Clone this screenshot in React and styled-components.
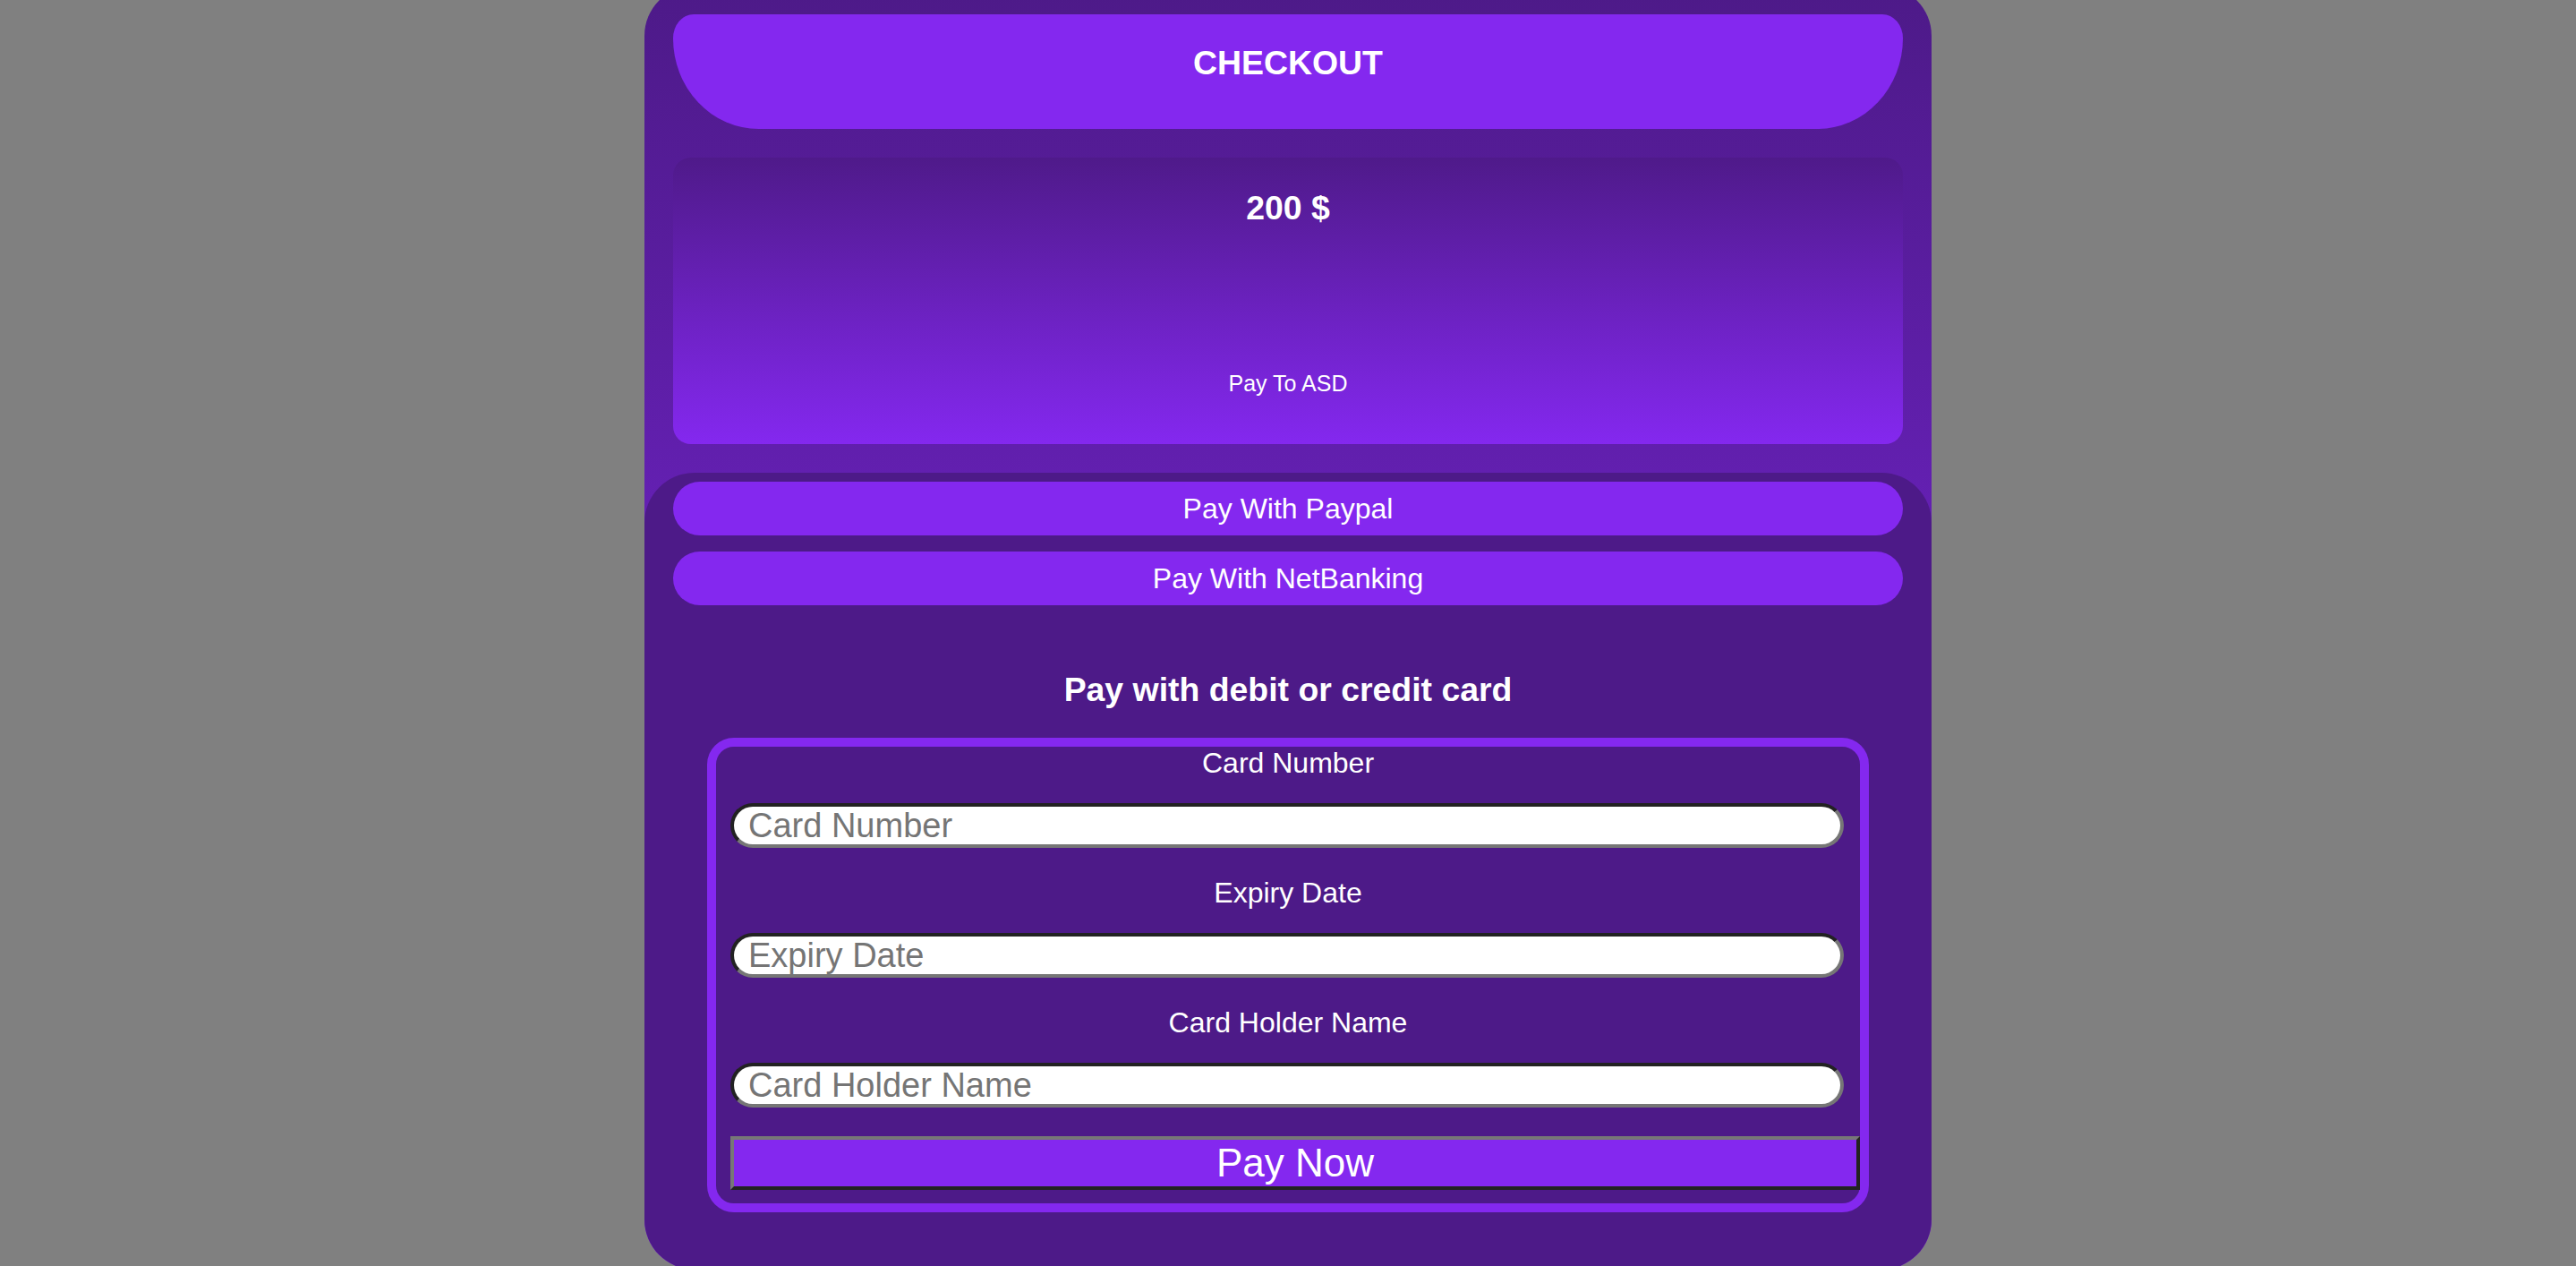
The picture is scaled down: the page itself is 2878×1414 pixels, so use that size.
import React from "react"
import styled, { createGlobalStyle } from "styled-components"

const DARK = "#4d1a88"
const BRIGHT = "#8428ef"

const GlobalStyle = createGlobalStyle`
  html, body {
    margin: 0;
    padding: 0;
    height: 100%;
    overflow: hidden;
    background: #808080;
    font-family: "Liberation Sans", Arial, sans-serif;
  }
`

const Page = styled.div`
  display: flex;
  justify-content: center;
  height: 100vh;
`

const Card = styled.div`
  width: 1438px;
  height: 1434px;
  margin-top: -16px;
  padding: 32px 32px 0;
  box-sizing: border-box;
  display: flex;
  flex-direction: column;
  border-radius: 56px;
  overflow: hidden;
  background: linear-gradient(${DARK}, ${BRIGHT});
  color: #fff;
  text-align: center;
`

const Heading = styled.h3`
  margin: 0;
  font-size: 37.4px;
  line-height: 43px;
  font-weight: 700;
`

const Header = styled.div`
  height: 128px;
  padding-top: 33px;
  box-sizing: border-box;
  background: ${BRIGHT};
  border-radius: 24px 24px 100px 100px / 28px 28px 106px 106px;
`

const Amount = styled.div`
  margin-top: 32px;
  height: 320px;
  padding-top: 35px;
  box-sizing: border-box;
  border-radius: 20px;
  background: linear-gradient(#4f1a8a, ${BRIGHT});

  ${Heading} {
    margin-bottom: 160px;
  }
`

const PayTo = styled.div`
  font-size: 25px;
  line-height: 29px;
`

const Methods = styled.div`
  flex: 1;
  margin: 32px -32px 0;
  padding: 10px 32px 0;
  background: ${DARK};
  border-radius: 56px 56px 0 0;
  display: flex;
  flex-direction: column;

  > ${Heading} {
    margin: 73px 0 32px;
  }
`

const MethodButton = styled.div`
  height: 60px;
  display: flex;
  align-items: center;
  justify-content: center;
  border-radius: 30px;
  background: ${BRIGHT};
  font-size: 32px;
  & + & {
    margin-top: 18px;
  }
`

const CardForm = styled.form`
  margin: 0 38px;
  padding: 0 16px 15px;
  border: 10px solid ${BRIGHT};
  border-radius: 30px;
  display: flex;
  flex-direction: column;
  align-items: stretch;
`

const Label = styled.label`
  font-size: 32px;
  line-height: 37px;
  margin-bottom: 26px;
`

const Input = styled.input`
  height: 50px;
  width: calc(100% - 2px);
  box-sizing: border-box;
  margin: 0 0 32px;
  padding: 0 16px;
  border: 4px solid #767676;
  border-top-color: #222;
  border-left-color: #222;
  border-radius: 25px;
  background: #fff;
  font-family: "Liberation Sans", Arial, sans-serif;
  font-size: 38px;
  color: #000;
  outline: none;

  &::placeholder {
    color: #757575;
  }
`

const PayNow = styled.button`
  width: calc(100% + 16px);
  height: 60px;
  box-sizing: border-box;
  margin: 0;
  padding: 0;
  border: 4px solid #222;
  border-top-color: #777;
  border-left-color: #777;
  background: ${BRIGHT};
  color: #fff;
  font-family: "Liberation Sans", Arial, sans-serif;
  font-size: 44px;
`

const fields = ["Card Number", "Expiry Date", "Card Holder Name"]

export default function App() {
  return (
    <>
      <GlobalStyle />
      <Page>
        <Card>
          <Header>
            <Heading>CHECKOUT</Heading>
          </Header>
          <Amount>
            <Heading>200 $</Heading>
            <PayTo>Pay To ASD</PayTo>
          </Amount>
          <Methods>
            <MethodButton>Pay With Paypal</MethodButton>
            <MethodButton>Pay With NetBanking</MethodButton>
            <Heading>Pay with debit or credit card</Heading>
            <CardForm onSubmit={e => e.preventDefault()}>
              {fields.map(f => (
                <React.Fragment key={f}>
                  <Label>{f}</Label>
                  <Input placeholder={f} />
                </React.Fragment>
              ))}
              <PayNow type="submit">Pay Now</PayNow>
            </CardForm>
          </Methods>
        </Card>
      </Page>
    </>
  )
}
